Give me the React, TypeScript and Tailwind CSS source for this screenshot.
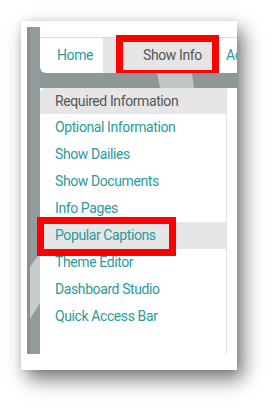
import React from "react";

const items = [
  "Optional Information",
  "Show Dailies",
  "Show Documents",
  "Info Pages",
  "Popular Captions",
  "Theme Editor",
  "Dashboard Studio",
  "Quick Access Bar",
];

export default function App() {
  return (
    <div
      className="w-[279px] h-[412px] bg-white pl-[21px] pt-[21px] overflow-hidden"
      style={{ fontFamily: "Roboto, 'Liberation Sans', sans-serif" }}
    >
      <div className="w-[216px] h-[349px] bg-white pl-[6px] pt-[6px] pb-[16px] shadow-[6px_9px_18px_rgba(0,0,0,0.55),0_0_6px_rgba(0,0,0,0.08)]">
        <div className="flex h-[327px] w-[210px]">
          {/* left band */}
          <div className="relative w-[13px] shrink-0 bg-[#939c9d]">
            <svg className="absolute left-0 top-0" width="13" height="327" viewBox="0 0 13 327">
              <rect x="0" y="0" width="3" height="327" fill="#88918f" />
              <polygon points="3,240 13,226 13,276 3,292" fill="#c6cbcc" />
            </svg>
          </div>
          {/* right column */}
          <div className="flex-1 min-w-0 flex flex-col bg-[#8e9798]">
            <div className="h-[11px] bg-white border-b border-[#dcdcdc]" />
            <div className="flex h-[35px] text-[14px] tracking-[-0.4px] bg-white">
              <div className="w-[63px] shrink-0 bg-[#8e9798]">
                <div className="h-full bg-white rounded-bl-[6px] flex items-center pl-[17px] text-[#2a9b9d]">
                  Home
                </div>
              </div>
              <div className="relative w-[114px] shrink-0 bg-[#e5e5e5] flex items-center pl-[40px] text-[#555555]">
                Show Info
                <div className="absolute left-[13px] top-[-3px] w-[103px] h-[42px] border-[7px] border-[#ff0000]" />
              </div>
              <div className="flex-1 min-w-0 overflow-hidden whitespace-nowrap flex items-center pl-[9px] text-[#2a9b9d]">
                Ac
              </div>
            </div>
            <div className="relative h-[15px] bg-[#8e9798]">
              <svg className="absolute left-[117px] top-0" width="37" height="15" viewBox="0 0 37 15">
                <polygon points="0,0 35,0 37,15 3,15" fill="#c0c6c7" />
              </svg>
            </div>
            <div className="flex-1 flex bg-white">
              <div className="w-[187px] shrink-0 rounded-tl-[6px] border-r border-[#e0e0e0] bg-[#8e9798]">
                <div className="h-full bg-white rounded-tl-[6px] flex flex-col text-[14px] tracking-[-0.4px]">
                  <div className="h-[26px] bg-[#e6e6e6] rounded-tl-[6px] flex items-center pl-[15px] text-[#555555]">
                    Required Information
                  </div>
                  {items.map((t) => (
                    <div
                      key={t}
                      className={
                        t === "Popular Captions"
                          ? "relative h-[27px] bg-[#e6e6e6] flex items-center pl-[15px] text-[#2a9b9d]"
                          : "h-[27px] flex items-center pl-[15px] text-[#2a9b9d]"
                      }
                    >
                      {t}
                      {t === "Popular Captions" && (
                        <div className="absolute left-[-3px] top-[-5px] w-[139px] h-[39px] border-[7px] border-[#ff0000]" />
                      )}
                    </div>
                  ))}
                </div>
              </div>
              <div className="flex-1 bg-white" />
            </div>
          </div>
        </div>
      </div>
    </div>
  );
}
